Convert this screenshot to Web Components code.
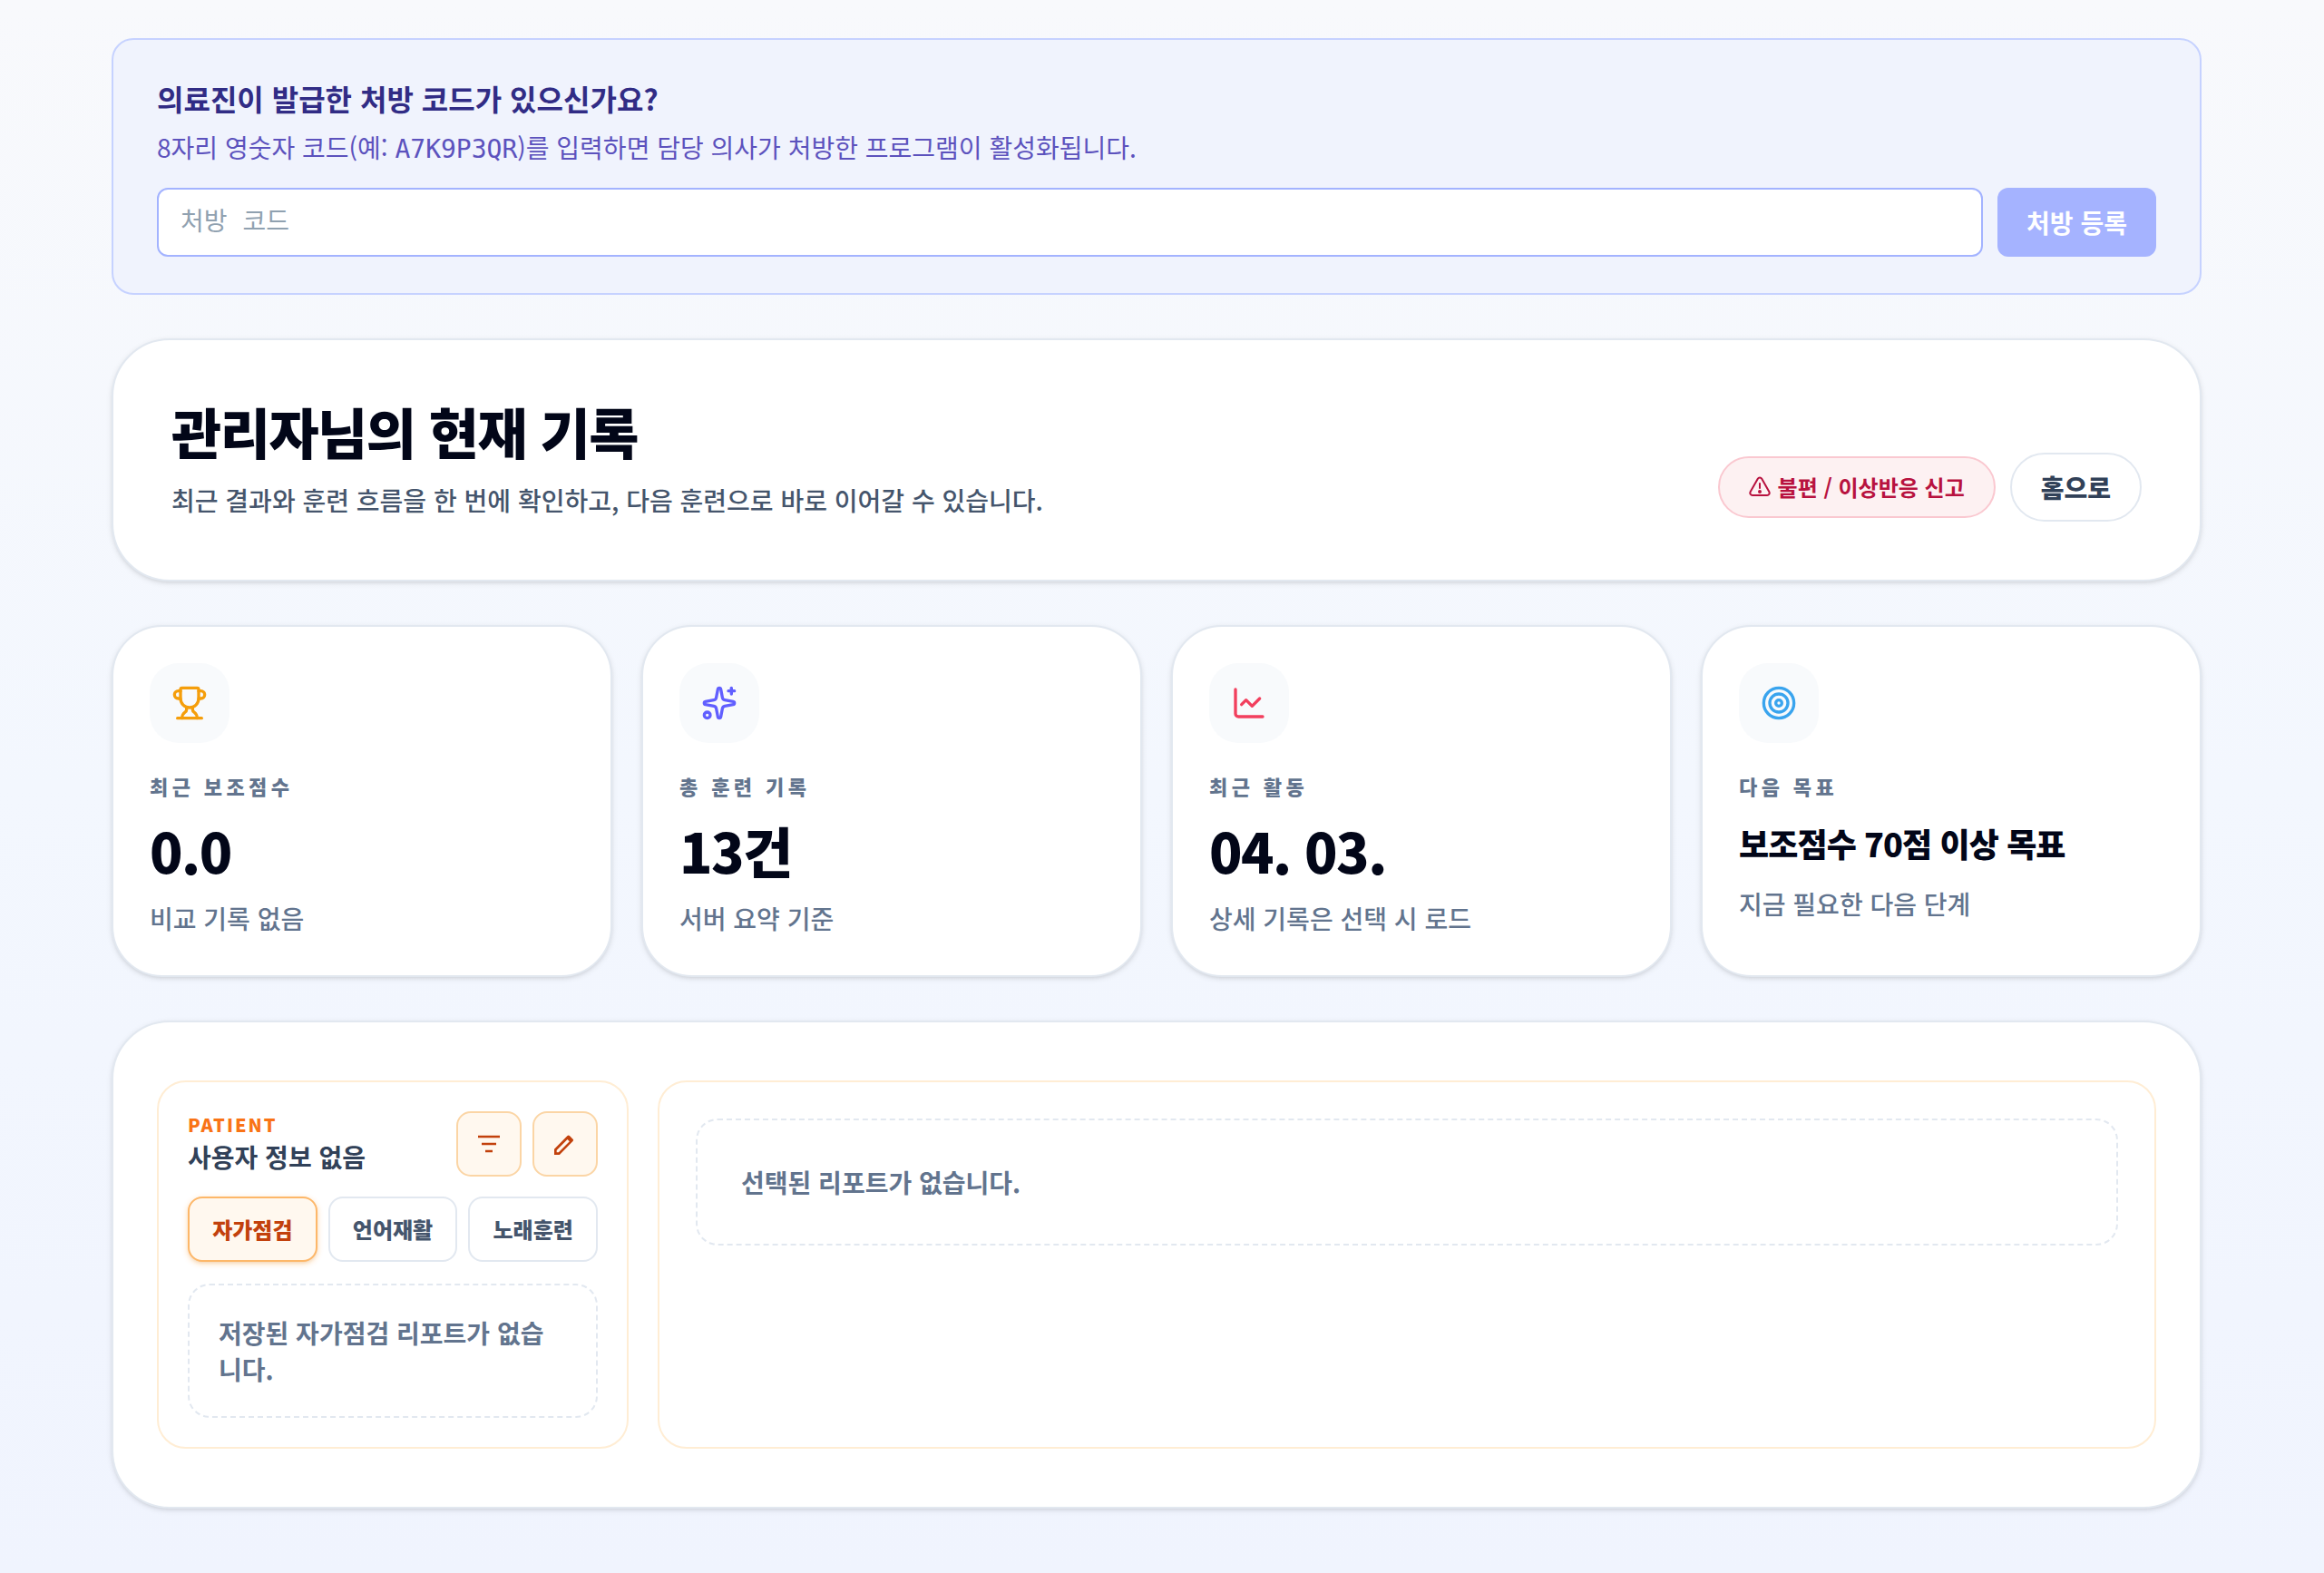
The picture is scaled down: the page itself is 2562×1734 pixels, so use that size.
<!DOCTYPE html>
<html lang="ko">
<head>
<meta charset="UTF-8">
<meta name="viewport" content="width=device-width, initial-scale=1.0">
<title>현재 기록</title>
<style>
    body {
        box-sizing: border-box;
        min-height: 100vh;
        margin: 0;
        padding: 42px 12px 70px 0;
        font-family: "Noto Sans CJK KR", sans-serif;
        font-size: 28px;
        line-height: 40px;
        color: #020618;
        background: linear-gradient(#f8f9fc, #f3f7fe 50%, #f0f4fe);
    }

    main {
        display: flex;
        flex-direction: column;
        gap: 48px;
        max-width: 2304px;
        margin: 0 auto;
    }

    .stats {
        display: grid;
        grid-template-columns: repeat(4, 1fr);
        gap: 32px;
    }
</style>
</head>
<body>
<main>
    <prescription-form></prescription-form>
    <record-header name="관리자"></record-header>
    <section class="stats">
        <stat-card icon="trophy" label="최근 보조점수" value="0.0" hint="비교 기록 없음"></stat-card>
        <stat-card icon="sparkles" label="총 훈련 기록" value="13건" hint="서버 요약 기준"></stat-card>
        <stat-card icon="chart" label="최근 활동" value="04. 03." hint="상세 기록은 선택 시 로드"></stat-card>
        <stat-card icon="target" label="다음 목표" value="보조점수 70점 이상 목표" hint="지금 필요한 다음 단계" compact></stat-card>
    </section>
    <report-board></report-board>
</main>

<script>
const reset = `
    * {
        margin: 0;
        padding: 0;
        box-sizing: border-box;
    }
    :host {
        display: block;
        box-sizing: border-box;
    }
    button, input {
        font: inherit;
        color: inherit;
    }
    button {
        cursor: pointer;
    }
`;

const card = `
    :host {
        background: #fff;
        border: 2px solid #e2e8f0;
        border-radius: 64px;
        box-shadow: 0 2px 6px rgba(0, 0, 0, 0.1), 0 2px 4px -2px rgba(0, 0, 0, 0.1);
    }
`;

class PrescriptionForm extends HTMLElement {

    constructor() {
        super();
        this.shadowDOM = this.attachShadow({ mode: "open" });
    }

    connectedCallback() {
        this.render();
    }

    render() {
        this.shadowDOM.innerHTML = `
        <style>
            ${reset}
            :host {
                padding: 40px 48px;
                border: 2px solid #c6d2ff;
                border-radius: 24px;
                background: #f0f3fd;
            }
            h2 {
                font-size: 32px;
                line-height: 48px;
                font-weight: 700;
                color: #312c85;
            }
            p {
                margin-top: 8px;
                line-height: 44px;
                color: #5c52bd;
            }
            code {
                font-family: "DejaVu Sans Mono", monospace;
                font-size: 28px;
                line-height: 1;
            }
            form {
                display: flex;
                gap: 16px;
                margin-top: 23px;
            }
            input {
                flex: 1;
                min-width: 0;
                padding: 16px 24px;
                border: 2px solid #a3b3ff;
                border-radius: 12px;
                background: #fff;
                font-family: "DejaVu Sans Mono", "Noto Sans CJK KR", monospace;
                color: #312c85;
            }
            input::placeholder {
                color: #90a1b0;
            }
            button {
                padding: 16px 32px;
                border: 0;
                border-radius: 12px;
                background: #a5b3ff;
                color: #fff;
                font-weight: 700;
                line-height: 44px;
            }
        </style>
        <h2>의료진이 발급한 처방 코드가 있으신가요?</h2>
        <p>8자리 영숫자 코드(예: <code>A7K9P3QR</code>)를 입력하면 담당 의사가 처방한 프로그램이 활성화됩니다.</p>
        <form>
            <input type="text" maxlength="8" placeholder="처방 코드" aria-label="처방 코드">
            <button type="button">처방 등록</button>
        </form>`;
    }
}

class RecordHeader extends HTMLElement {

    constructor() {
        super();
        this.shadowDOM = this.attachShadow({ mode: "open" });
    }

    connectedCallback() {
        this.render();
    }

    render() {
        this.shadowDOM.innerHTML = `
        <style>
            ${reset}
            ${card}
            :host {
                display: flex;
                align-items: flex-end;
                justify-content: space-between;
                gap: 32px;
                padding: 64px;
            }
            h1 {
                font-size: 60px;
                line-height: 72px;
                font-weight: 900;
                letter-spacing: -0.025em;
            }
            p {
                margin-top: 16px;
                line-height: 48px;
                font-weight: 500;
                color: #45556c;
            }
            .actions {
                display: flex;
                align-items: center;
                gap: 16px;
            }
            button {
                padding: 16px 32px;
                border: 2px solid #e2e8f0;
                border-radius: 38px;
                background: #fff;
                font-weight: 900;
                color: #314158;
            }
            .report {
                display: flex;
                align-items: center;
                gap: 8px;
                border-color: #fac8d0;
                background: #fdf1f2;
                color: #b8123f;
                font-size: 24px;
                line-height: 32px;
                font-weight: 700;
            }
            svg {
                width: 24px;
                height: 24px;
            }
        </style>
        <div>
            <h1>${this.getAttribute("name")}님의 현재 기록</h1>
            <p>최근 결과와 훈련 흐름을 한 번에 확인하고, 다음 훈련으로 바로 이어갈 수 있습니다.</p>
        </div>
        <div class="actions">
            <button class="report" type="button">
                <svg viewBox="0 0 24 24" fill="none" stroke="currentColor" stroke-width="2" stroke-linejoin="round" stroke-linecap="round" aria-hidden="true">
                    <path d="M9.8 2.7 1.7 17.1A2.6 2.6 0 0 0 4 21h16a2.6 2.6 0 0 0 2.3-3.9L14.2 2.7a2.5 2.5 0 0 0-4.4 0z"/>
                    <path d="M12 8v5"/>
                    <circle cx="12" cy="17" r="1" fill="currentColor"/>
                </svg>
                <span>불편 / 이상반응 신고</span>
            </button>
            <button type="button">홈으로</button>
        </div>`;
    }
}

const statIcons = {
    trophy: {
        color: "#f59e0b",
        shape: `<path d="M10 14.66v1.626a2 2 0 0 1-.976 1.696A5 5 0 0 0 7 21.978"/><path d="M14 14.66v1.626a2 2 0 0 0 .976 1.696A5 5 0 0 1 17 21.978"/><path d="M18 9h1.5a1 1 0 0 0 0-5H18"/><path d="M4 22h16"/><path d="M6 9a6 6 0 0 0 12 0V3a1 1 0 0 0-1-1H7a1 1 0 0 0-1 1z"/><path d="M6 9H4.5a1 1 0 0 1 0-5H6"/>`
    },
    sparkles: {
        color: "#615fff",
        shape: `<path d="M11.017 2.814a1 1 0 0 1 1.966 0l1.051 5.558a2 2 0 0 0 1.594 1.594l5.558 1.051a1 1 0 0 1 0 1.966l-5.558 1.051a2 2 0 0 0-1.594 1.594l-1.051 5.558a1 1 0 0 1-1.966 0l-1.051-5.558a2 2 0 0 0-1.594-1.594l-5.558-1.051a1 1 0 0 1 0-1.966l5.558-1.051a2 2 0 0 0 1.594-1.594z"/><path d="M20 2v4"/><path d="M22 4h-4"/><circle cx="4" cy="20" r="2"/>`
    },
    chart: {
        color: "#f23f5d",
        shape: `<path d="M3 3v16a2 2 0 0 0 2 2h16"/><path d="m19 9-5 5-4-4-3 3"/>`
    },
    target: {
        color: "#39a4ee",
        shape: `<circle cx="12" cy="12" r="10"/><circle cx="12" cy="12" r="6"/><circle cx="12" cy="12" r="2"/>`
    }
};

class StatCard extends HTMLElement {

    constructor() {
        super();
        this.shadowDOM = this.attachShadow({ mode: "open" });
    }

    connectedCallback() {
        this.render();
    }

    render() {
        const icon = statIcons[this.getAttribute("icon")];
        this.shadowDOM.innerHTML = `
        <style>
            ${reset}
            ${card}
            :host {
                padding: 40px;
                border-radius: 56px;
            }
            .icon {
                display: grid;
                place-items: center;
                width: 88px;
                height: 88px;
                border-radius: 32px;
                background: #f8fafc;
                color: ${icon.color};
            }
            svg {
                width: 40px;
                height: 40px;
            }
            .label {
                margin-top: 32px;
                font-size: 22px;
                line-height: 30px;
                font-weight: 900;
                letter-spacing: 0.2em;
                color: #62748e;
            }
            .value {
                margin-top: 16px;
                font-size: 60px;
                line-height: 80px;
                font-weight: 900;
                letter-spacing: -0.025em;
            }
            :host([compact]) .value {
                font-size: 36px;
                line-height: 64px;
            }
            .hint {
                margin-top: 12px;
                line-height: 46px;
                font-weight: 500;
                color: #62748e;
            }
        </style>
        <div class="icon">
            <svg viewBox="0 0 24 24" fill="none" stroke="currentColor" stroke-width="2" stroke-linecap="round" stroke-linejoin="round" aria-hidden="true">${icon.shape}</svg>
        </div>
        <p class="label">${this.getAttribute("label")}</p>
        <p class="value">${this.getAttribute("value")}</p>
        <p class="hint">${this.getAttribute("hint")}</p>`;
    }
}

class EmptyNote extends HTMLElement {

    constructor() {
        super();
        this.shadowDOM = this.attachShadow({ mode: "open" });
        this.shadowDOM.innerHTML = `
        <style>
            ${reset}
            p {
                padding: var(--note-padding, 32px);
                border: 2px dashed #e2e8f0;
                border-radius: 24px;
                font-weight: 700;
                color: #62748e;
            }
        </style>
        <p><slot></slot></p>`;
    }
}

class ReportBoard extends HTMLElement {

    constructor() {
        super();
        this.shadowDOM = this.attachShadow({ mode: "open" });
    }

    connectedCallback() {
        this.render();
    }

    render() {
        this.shadowDOM.innerHTML = `
        <style>
            ${reset}
            ${card}
            :host {
                display: grid;
                grid-template-columns: 520px 1fr;
                gap: 32px;
                padding: 64px 48px;
            }
            .panel {
                padding: 32px;
                border: 2px solid #ffedd4;
                border-radius: 32px;
            }
            .detail {
                --note-padding: 48px;
                padding: 40px;
            }
            header {
                display: flex;
                justify-content: space-between;
            }
            .patient {
                font-size: 20px;
                line-height: 30px;
                font-weight: 900;
                letter-spacing: 0.1em;
                color: #f97316;
            }
            h2 {
                font-size: 28px;
                line-height: 40px;
                font-weight: 700;
                color: #314158;
            }
            .tools {
                display: flex;
                gap: 12px;
            }
            .tools button {
                display: grid;
                place-items: center;
                width: 72px;
                height: 72px;
                border: 2px solid #fbd5a5;
                border-radius: 16px;
                background: #fff8ef;
                color: #c2410c;
            }
            svg {
                width: 32px;
                height: 32px;
            }
            nav {
                display: grid;
                grid-template-columns: repeat(3, 1fr);
                gap: 12px;
                margin: 22px 0 24px;
            }
            nav button {
                height: 72px;
                border: 2px solid #e2e8f0;
                border-radius: 16px;
                background: #fff;
                font-size: 24px;
                font-weight: 900;
                color: #45556c;
            }
            nav button.active {
                border-color: #fdb769;
                background: #fff8ef;
                color: #c2410c;
                box-shadow: 0 2px 6px rgba(255, 137, 4, 0.3), 0 2px 4px -2px rgba(0, 0, 0, 0.1);
            }
        </style>
        <section class="panel">
            <header>
                <div>
                    <p class="patient">PATIENT</p>
                    <h2>사용자 정보 없음</h2>
                </div>
                <div class="tools">
                    <button type="button" aria-label="필터">
                        <svg viewBox="0 0 24 24" fill="none" stroke="currentColor" stroke-width="2" aria-hidden="true">
                            <path d="M3 6h18M6 12h12M9 18h6"/>
                        </svg>
                    </button>
                    <button type="button" aria-label="편집">
                        <svg viewBox="0 0 24 24" fill="currentColor" fill-rule="evenodd" aria-hidden="true">
                            <path d="M3 21v-4.6L13.9 5.3a1.3 1.3 0 0 1 1.8 0l2.7 2.7a1.3 1.3 0 0 1 0 1.8L7.4 21zM5 19h1.6l9-9-1.7-1.7-8.9 9z"/>
                        </svg>
                    </button>
                </div>
            </header>
            <nav>
                <button class="active" type="button">자가점검</button>
                <button type="button">언어재활</button>
                <button type="button">노래훈련</button>
            </nav>
            <empty-note>저장된 자가점검 리포트가 없습니다.</empty-note>
        </section>
        <section class="panel detail">
            <empty-note>선택된 리포트가 없습니다.</empty-note>
        </section>`;
    }
}

customElements.define("prescription-form", PrescriptionForm);
customElements.define("record-header", RecordHeader);
customElements.define("stat-card", StatCard);
customElements.define("empty-note", EmptyNote);
customElements.define("report-board", ReportBoard);
</script>
</body>
</html>
